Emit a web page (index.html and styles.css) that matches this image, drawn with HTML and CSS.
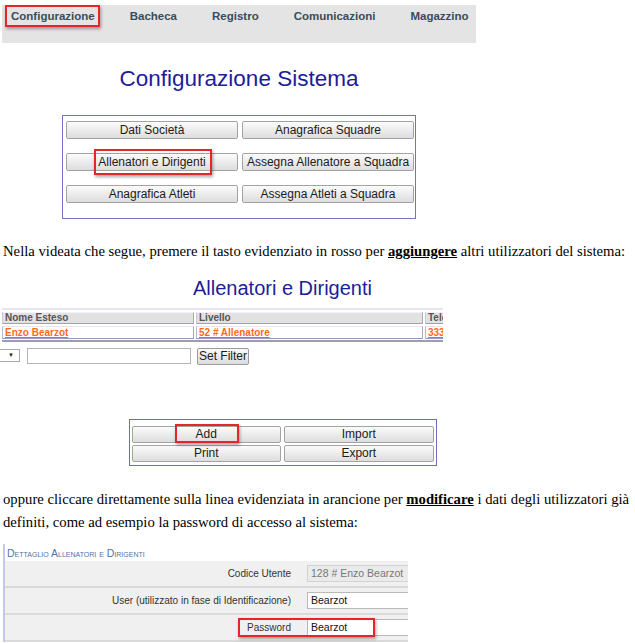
FILE: index.html
```html
<!DOCTYPE html>
<html lang="it">
<head>
<meta charset="utf-8">
<title>Configurazione Sistema</title>
<link rel="stylesheet" href="styles.css">
</head>
<body>
<nav class="nav">
  <span class="nav-item hl hl-nav">Configurazione</span>
  <span class="nav-item">Bacheca</span>
  <span class="nav-item">Registro</span>
  <span class="nav-item">Comunicazioni</span>
  <span class="nav-item">Magazzino</span>
</nav>

<section class="sys">
  <h1 class="title">Configurazione Sistema</h1>
  <div class="btnbox">
    <div class="btn">Dati Società</div>
    <div class="btn">Anagrafica Squadre</div>
    <div class="btn"><span class="hl hl-btn">Allenatori e Dirigenti</span></div>
    <div class="btn">Assegna Allenatore a Squadra</div>
    <div class="btn">Anagrafica Atleti</div>
    <div class="btn">Assegna Atleti a Squadra</div>
  </div>
</section>

<p class="doc doc1">Nella videata che segue, premere il tasto evidenziato in rosso per <b class="em">aggiungere</b> altri utilizzatori del sistema:</p>

<section class="list">
  <h2 class="title2">Allenatori e Dirigenti</h2>
  <div class="grid-wrap">
    <div class="grid">
      <div class="th">Nome Esteso</div>
      <div class="th">Livello</div>
      <div class="th">Tele</div>
      <div class="td"><span class="lnk">Enzo Bearzot</span></div>
      <div class="td"><span class="lnk">52 # Allenatore</span></div>
      <div class="td"><span class="lnk">333</span></div>
    </div>
  </div>
  <div class="filter">
    <div class="sel">&#9660;</div>
    <div class="inp"></div>
    <div class="fbtn">Set Filter</div>
  </div>
  <div class="actions">
    <div class="btn abtn"><span class="hl hl-add">Add</span></div>
    <div class="btn abtn">Import</div>
    <div class="btn abtn">Print</div>
    <div class="btn abtn">Export</div>
  </div>
</section>

<p class="doc doc2">oppure cliccare direttamente sulla linea evidenziata in arancione per <b class="em">modificare</b> i dati degli utilizzatori già<br>definiti, come ad esempio la password di accesso al sistema:</p>

<section class="detail">
  <div class="dtitle">Dettaglio Allenatori e Dirigenti</div>
  <div class="rows">
    <div class="row">
      <div class="label">Codice Utente</div>
      <div class="field disabled">128 # Enzo Bearzot</div>
    </div>
    <div class="row">
      <div class="label">User (utilizzato in fase di Identificazione)</div>
      <div class="field">Bearzot</div>
    </div>
    <div class="row">
      <div class="label">Password</div>
      <div class="field">Bearzot</div>
      <div class="pw-hl"></div>
    </div>
  </div>
</section>
</body>
</html>
```

FILE: styles.css
```css
* { box-sizing: border-box; }

html, body { background: #ffffff; }

body {
  margin: 0;
  width: 635px;
  height: 643px;
  overflow: hidden;
  font-family: "Liberation Sans", Arial, sans-serif;
  color: #000;
}

/* ---------- top navigation ---------- */
.nav {
  display: flex;
  align-items: flex-start;
  gap: 35px;
  margin: 5px 0 0 2px;
  width: 474px;
  height: 38px;
  padding: 4px 0 0 9px;
  background: #e4e4e4;
}

.nav-item {
  font-size: 11.5px;
  line-height: 14px;
  font-weight: bold;
  color: #3a4b5c;
  white-space: nowrap;
}

/* red highlight frames */
.hl { position: relative; }
.hl::after {
  content: "";
  position: absolute;
  border: 2px solid #e4262b;
  box-shadow: 1px 2px 3px rgba(0, 0, 0, 0.35);
}
.hl-nav::after { left: -6px; right: -5px; top: -4px; bottom: -4px; }
.hl-btn::after { left: -4px; right: -6px; top: -6px; bottom: -6px; }
.hl-add::after { left: -21px; right: -22px; top: -3px; bottom: -2px; }

/* ---------- configurazione sistema ---------- */
.sys { width: 478px; }

.title {
  margin: 23px 0 0;
  font-size: 22.5px;
  line-height: 26px;
  font-weight: normal;
  color: #1d1d9b;
  text-align: center;
}

.btnbox {
  margin: 23px auto 0;
  width: 354px;
  border: 1px solid #7272cc;
  padding: 5px 1px 15px 3px;
  display: grid;
  grid-template-columns: 172px 172px;
  column-gap: 4px;
  row-gap: 14px;
}

.btn {
  height: 18px;
  border: 1px solid #a3a3a3;
  border-radius: 2px;
  background: linear-gradient(#fbfbfb, #dddddd);
  font-size: 12px;
  line-height: 16px;
  text-align: center;
  color: #1b1b1b;
  white-space: nowrap;
}

/* ---------- document text ---------- */
.doc {
  margin: 22px 0 0;
  padding-left: 3px;
  font-family: "Liberation Serif", "Times New Roman", serif;
  font-size: 14.7px;
  line-height: 20px;
  color: #000;
  white-space: nowrap;
}
.doc .em { font-weight: bold; text-decoration: underline; }
.doc2 { line-height: 23px; margin-top: 22px; }

/* ---------- allenatori e dirigenti ---------- */
.list { width: 565px; }

.title2 {
  margin: 15px 0 0;
  font-size: 20px;
  line-height: 24px;
  font-weight: normal;
  color: #1d1d9b;
  text-align: center;
}

.grid-wrap {
  margin: 8px 0 0 2px;
  width: 441px;
  overflow: hidden;
  border-top: 2px solid #e4e4f4;
  border-bottom: 2px solid #9c9cb6;
  padding: 2px 0 1px;
}

.grid {
  width: 565px;
  display: grid;
  grid-template-columns: 192px 227px 1fr;
  grid-template-rows: 12px 13px;
  gap: 2px;
}

.th {
  background: #e2e2e2;
  border: 1px solid;
  border-color: #f2f2f8 #a9a9bc #a0a0b0 #c8c8d8;
  padding-left: 2px;
  font-size: 10px;
  line-height: 10px;
  font-weight: bold;
  color: #555;
  white-space: nowrap;
}

.td {
  background: #fff;
  border: 1px solid;
  border-color: #e4e4f2 #a8a8c8 #9898b8 #b8b8d8;
  padding-left: 2px;
  font-size: 10px;
  line-height: 11px;
  font-weight: bold;
  white-space: nowrap;
}
.lnk { color: #ff6a1a; text-decoration: underline; }

.filter {
  display: flex;
  align-items: flex-start;
  margin-top: 6px;
  height: 17px;
}
.sel {
  width: 20px;
  height: 13px;
  margin-top: 1px;
  border: 1px solid #a9a9a9;
  border-left: 0;
  padding-right: 5px;
  font-size: 6px;
  line-height: 11px;
  text-align: right;
  color: #222;
}
.inp {
  width: 164px;
  height: 16px;
  margin-left: 7px;
  border: 1px solid #b5b5b5;
  background: #fff;
}
.fbtn {
  width: 52px;
  height: 17px;
  margin-left: 6px;
  border: 1px solid #9a9a9a;
  border-radius: 2px;
  background: linear-gradient(#fafafa, #dcdcdc);
  font-size: 12px;
  line-height: 15px;
  text-align: center;
  color: #1b1b1b;
  white-space: nowrap;
}

.actions {
  margin: 54px auto 0;
  width: 308px;
  border: 1px solid #6c6cc8;
  padding: 6px 2px 3px;
  display: grid;
  grid-template-columns: 1fr 1fr;
  gap: 2px 3px;
}
.abtn { height: 17px; line-height: 15px; }

/* ---------- dettaglio ---------- */
.detail {
  margin: 10px 0 0 3px;
  width: 405px;
  border-left: 2px solid #c6c6ee;
  overflow: hidden;
}

.dtitle {
  height: 17px;
  padding: 2px 0 0 2px;
  font-size: 10.5px;
  line-height: 14px;
  font-variant: small-caps;
  color: #5473a6;
  white-space: nowrap;
}

.rows { width: 520px; }

.row {
  position: relative;
  display: flex;
  align-items: center;
  height: 27px;
  background: #f0f0f0;
  border-bottom: 2px solid #dadada;
}

.label {
  width: 286px;
  text-align: right;
  font-size: 10px;
  color: #333;
  white-space: nowrap;
}

.field {
  width: 130px;
  height: 17px;
  margin-left: 16px;
  padding-left: 3px;
  border: 1px solid #b9b9b9;
  background: #fff;
  font-size: 10.5px;
  line-height: 15px;
  color: #111;
  white-space: nowrap;
}
.field.disabled {
  background: #ebebeb;
  border-color: #d2d2d2;
  color: #777;
}

.pw-hl {
  position: absolute;
  left: 233px;
  top: 3px;
  width: 137px;
  height: 19px;
  border: 2px solid #e4262b;
  box-shadow: 1px 2px 3px rgba(0, 0, 0, 0.35);
}
```
